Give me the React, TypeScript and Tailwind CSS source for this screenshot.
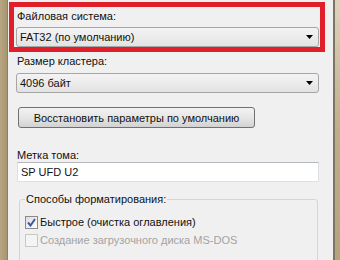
import React from 'react';

const Arrow: React.FC = () => (
  <svg width="7" height="4" viewBox="0 0 7 4" className="shrink-0">
    <path d="M0 0 H7 L3.5 4 Z" fill="#000" />
  </svg>
);

const Combo: React.FC<{ value: string; className?: string }> = ({ value, className = '' }) => (
  <div
    className={`shrink-0 h-[20px] flex items-center justify-between pl-[3px] pr-[5px] border border-[#a6a6a6] rounded-[3px] bg-gradient-to-b from-[#f3f3f3] via-[#ececec] to-[#e2e2e2] ${className}`}
  >
    <span className="leading-[14px]">{value}</span>
    <Arrow />
  </div>
);

const CheckRow: React.FC<{ label: string; checked?: boolean; disabled?: boolean }> = ({ label, checked, disabled }) => (
  <div className="h-[18px] flex items-center gap-[1px]">
    <div
      className={`w-[13px] h-[13px] flex items-center justify-center border ${
        disabled ? 'border-[#c8c8c8] bg-[#f4f4f4]' : 'border-[#8a8a8a] bg-gradient-to-br from-[#dcdcdc] to-[#ffffff]'
      }`}
    >
      {checked && (
        <svg width="9" height="9" viewBox="0 0 9 9">
          <path d="M1 4.5 L3.5 7.5 L8 1" stroke="#3d5a9c" strokeWidth="2" fill="none" />
        </svg>
      )}
    </div>
    <span className={`leading-[14px] ml-[1px] ${disabled ? 'text-[#a3a3a3]' : 'text-[#111]'}`}>{label}</span>
  </div>
);

export default function App() {
  return (
    <div className="w-[340px] h-[260px] overflow-hidden flex bg-[#c4b594] text-[11px] text-[#111] font-['Liberation_Sans',sans-serif]">
      <div className="w-[7px] h-full bg-gradient-to-r from-[#b8a684] to-[#a8966f]" />
      <div className="w-[1px] h-full bg-[#8c8068]" />
      <div className="w-[325px] h-full bg-[#f0f0f0] flex flex-col">
        {/* file system – highlighted */}
        <div className="shrink-0 ml-[1px] mt-[2px] w-[316px] h-[50px] border-[5px] border-[#e11f2b] flex flex-col">
          <div className="shrink-0 pl-[3px] pt-[2px] h-[16px] leading-[14px]">Файловая система:</div>
          <Combo value="FAT32 (по умолчанию)" className="mt-[4px] ml-[2px] mr-[1px]" />
        </div>

        <div className="shrink-0 ml-[9px] mt-[2px] h-[14px] leading-[14px]">Размер кластера:</div>
        <Combo value="4096 байт" className="ml-[8px] mt-[5px] w-[303px]" />

        <button className="shrink-0 ml-[10px] mt-[14px] w-[237px] h-[21px] border border-[#707070] rounded-[3px] bg-gradient-to-b from-[#f2f2f2] via-[#e6e6e6] to-[#d2d2d2] leading-[14px]">
          Восстановить параметры по умолчанию
        </button>

        <div className="shrink-0 ml-[9px] mt-[20px] h-[14px] leading-[14px]">Метка тома:</div>
        <div className="shrink-0 ml-[9px] w-[302px] h-[20px] flex items-center pl-[3px] bg-white border border-[#dcdfe3] border-t-[#b5b8bc]">
          <span className="leading-[14px]">SP UFD U2</span>
        </div>

        <fieldset className="shrink-0 ml-[11px] mt-[10px] w-[299px] h-[90px] pl-[5px] border border-[#d5d5d5] rounded-[3px]">
          <legend className="px-[1px] leading-[14px]">Способы форматирования:</legend>
          <div className="mt-[7px] flex flex-col">
            <CheckRow label="Быстрое (очистка оглавления)" checked />
            <CheckRow label="Создание загрузочного диска MS-DOS" disabled />
          </div>
        </fieldset>
      </div>
      <div className="w-[2px] h-full bg-[#7d7464]" />
      <div className="flex-1 h-full bg-gradient-to-b from-[#ddd3bd] via-[#bfae8a] to-[#b5a37e]" />
    </div>
  );
}
